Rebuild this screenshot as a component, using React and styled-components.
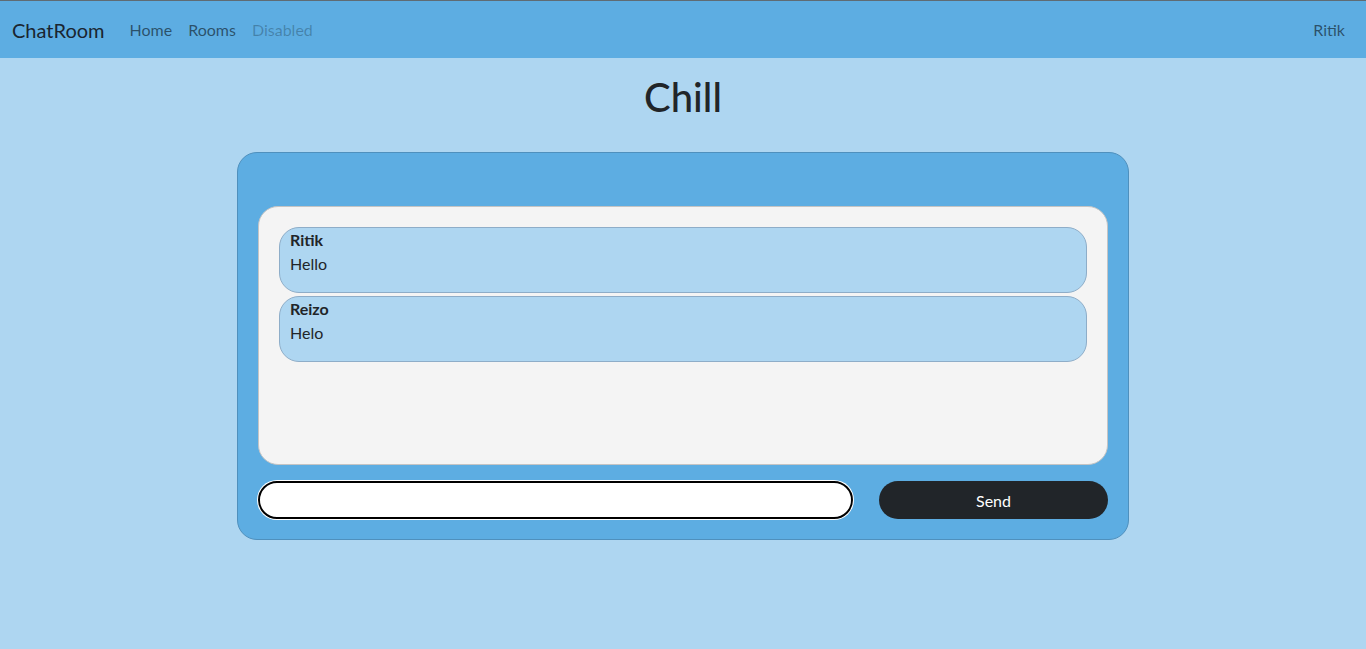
import React from "react";
import styled, { createGlobalStyle } from "styled-components";

const GlobalStyle = createGlobalStyle`
  html, body {
    margin: 0;
    padding: 0;
    background: #aed6f1;
    font-family: "Lato", "Open Sans", sans-serif;
    color: #212529;
  }
  * { box-sizing: border-box; }
`;

const Page = styled.div`
  min-height: 649px;
  background: #aed6f1;
`;

const Navbar = styled.nav`
  display: flex;
  align-items: center;
  height: 58px;
  padding: 0 21px 0 12px;
  background: #5dade2;
  border-top: 1px solid #5f6b73;
`;

const Brand = styled.a`
  font-size: 20px;
  color: #1a2530;
  margin-right: 25px;
`;

const NavLinks = styled.div`
  display: flex;
  gap: 16px;
  flex: 1;
`;

const NavLink = styled.a`
  font-size: 16px;
  color: ${(p) => (p.disabled ? "rgba(0,0,0,0.25)" : "rgba(0,0,0,0.55)")};
`;

const UserName = styled.span`
  font-size: 16px;
  color: rgba(0, 0, 0, 0.55);
`;

const Title = styled.h1`
  margin: 15px 0 31px;
  text-align: center;
  font-size: 40px;
  font-weight: 500;
  line-height: 48px;
  color: #212529;
`;

const Card = styled.div`
  width: 892px;
  margin: 0 auto;
  padding: 53px 20px 20px;
  background: #5dade2;
  border: 1px solid #4f90bd;
  border-radius: 20px;
`;

const ChatBox = styled.div`
  height: 259px;
  padding: 20px;
  background: #f4f4f4;
  border: 1px solid #c4c4c4;
  border-radius: 20px;
  display: flex;
  flex-direction: column;
  gap: 3px;
`;

const Message = styled.div`
  height: 66px;
  padding: 0 10px;
  background: #aed6f1;
  border: 1px solid #8eadc8;
  border-radius: 20px;
`;

const Sender = styled.div`
  font-weight: 700;
  font-size: 16px;
  line-height: 24px;
`;

const Body = styled.div`
  font-size: 16px;
  line-height: 24px;
`;

const Composer = styled.form`
  display: flex;
  gap: 26px;
  margin-top: 16px;
`;

const Input = styled.input`
  width: 595px;
  height: 38px;
  border: 2px solid #000;
  border-radius: 19px;
  background: #fff;
  box-shadow: 0 0 0 1px #fff;
  padding: 0 12px;
  font-size: 16px;
  font-family: inherit;
  outline: none;
`;

const SendButton = styled.button`
  flex: 1;
  height: 38px;
  border: none;
  border-radius: 19px;
  background: #212529;
  color: #fff;
  font-size: 16px;
  font-family: inherit;
  cursor: pointer;
`;

const messages = [
  { user: "Ritik", text: "Hello" },
  { user: "Reizo", text: "Helo" },
];

export default function App() {
  return (
    <Page>
      <GlobalStyle />
      <Navbar>
        <Brand>ChatRoom</Brand>
        <NavLinks>
          <NavLink>Home</NavLink>
          <NavLink>Rooms</NavLink>
          <NavLink disabled>Disabled</NavLink>
        </NavLinks>
        <UserName>Ritik</UserName>
      </Navbar>
      <Title>Chill</Title>
      <Card>
        <ChatBox>
          {messages.map((m, i) => (
            <Message key={i}>
              <Sender>{m.user}</Sender>
              <Body>{m.text}</Body>
            </Message>
          ))}
        </ChatBox>
        <Composer onSubmit={(e) => e.preventDefault()}>
          <Input type="text" />
          <SendButton type="submit">Send</SendButton>
        </Composer>
      </Card>
    </Page>
  );
}
